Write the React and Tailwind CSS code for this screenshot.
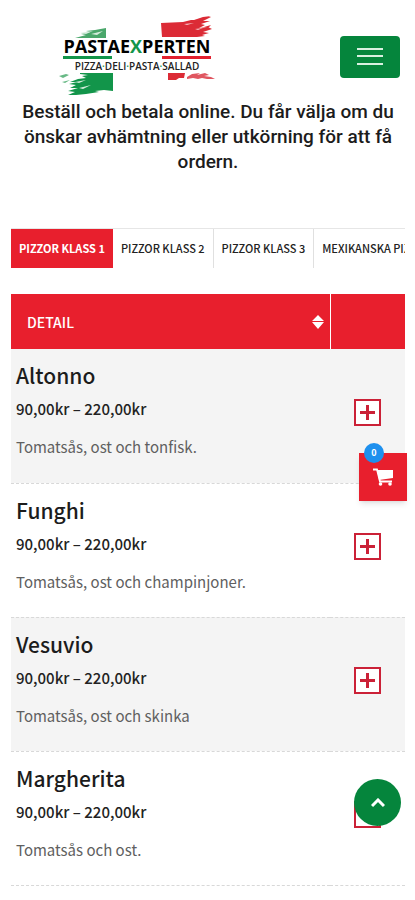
import React, { useState } from 'react';

const tabs = ['Pizzor klass 1', 'Pizzor klass 2', 'Pizzor klass 3', 'Mexikanska pizzor'];

const pizzas = [
  { name: 'Altonno', price: '90,00kr – 220,00kr', text: 'Tomatsås, ost och tonfisk.' },
  { name: 'Funghi', price: '90,00kr – 220,00kr', text: 'Tomatsås, ost och champinjoner.' },
  { name: 'Vesuvio', price: '90,00kr – 220,00kr', text: 'Tomatsås, ost och skinka' },
  { name: 'Margherita', price: '90,00kr – 220,00kr', text: 'Tomatsås och ost.' },
];

const Logo = () => (
  <svg width="160" height="86" viewBox="0 0 160 86" role="img" aria-label="Pastaexperten">
    {/* green brush, top left */}
    <path d="M48 14l-11 2-9 1 4 1-9 2 5 1-11 3h31z" fill="#4aa76b" />
    <path d="M22 19l13-2-7 3zM33 20l12-3-6 4z" fill="#d5ecdc" />
    {/* red brush, top right */}
    <path
      d="M103 9l22-1 8-2 6 0 8-3 6 0-8 4 7 0-9 3 4 1-6 3 9-1 4 2-9 3 6 1-7 2 3 1-8 1h-35z"
      fill="#dc2b36"
    />
    <path d="M136 6l9-3 8-1-9 4zM146 13l7-2-3 3z" fill="#dc2b36" />
    <path d="M126 10l10-1-7 2zM137 15l8-1-5 2z" fill="#f6c4c8" />
    {/* lines below the name */}
    <path d="M5 42h49v3H5z" fill="#12954a" />
    <path d="M104 42h49v3h-49z" fill="#e2202f" />
    {/* green brush, bottom left */}
    <path
      d="M22 59h33v18l-9-1-9 1 4 1-13 2-10 1-8 0 7-3-7-1 10-3-8 0 6-3-7-1 8-2-7 0 8-3 8-1-4-2 6-1-8-1z"
      fill="#12954a"
    />
    <path d="M1 62l7-2 3 1-6 3zM4 68l8-2-5 3z" fill="#67b985" />
    <path d="M17 68l11-2-7 3zM21 74l12-3-8 4z" fill="#d5ecdc" />
    {/* red brush, bottom right */}
    <path d="M110 59h17l-1 5-5 0-3 2-8 0z" fill="#dc2b36" />
    <path
      d="M129 63l5-3 8-1-3 2 8-2 4 2-5 1 7 1 4 2-8 0-5-1-4 1-5-1-6 1z"
      fill="#e05660"
    />
    <text
      x="79"
      y="39"
      textAnchor="middle"
      className="fill-black font-['Open_Sans',sans-serif] text-[18px] font-bold"
    >
      PASTAE<tspan className="fill-[#12954a]">X</tspan>PERTEN
    </text>
    <text
      x="79"
      y="56"
      textAnchor="middle"
      className="fill-[#222] font-['Open_Sans',sans-serif] text-[10px] font-semibold"
    >
      PIZZA<tspan className="fill-[#12954a]">·</tspan>DELI<tspan className="fill-[#12954a]">·</tspan>PASTA<tspan className="fill-[#12954a]">·</tspan>SALLAD
    </text>
  </svg>
);

const PlusIcon = () => (
  <svg width="27" height="27" viewBox="0 0 27 27" fill="none" stroke="#cb2137">
    <rect x="1" y="1" width="25" height="25" fill="#fff" strokeWidth="2" />
    <path d="M13.500 6v15M6 13.500h15" strokeWidth="3" />
  </svg>
);

const CartIcon = () => (
  <svg width="21" height="19" viewBox="0 0 21 19" fill="none">
    <path d="M0 1.500h4l3 12h12" stroke="#fff" strokeWidth="1.800" />
    <path d="M4 2h16v8L6 12z" fill="#fff" />
    <circle cx="7.500" cy="16" r="1.800" fill="#fff" />
    <circle cx="17" cy="16" r="1.800" fill="#fff" />
  </svg>
);

const App = () => {
  const [active, setActive] = useState(0);

  return (
    <div className="min-h-screen bg-white pr-[10px] pl-[11px] font-['Noto_Sans_CJK_SC',sans-serif] text-[#222]">
      <header className="flex items-start justify-between pt-[14px] pr-[5px] pl-[47px]">
        <a href="#" className="block">
          <Logo />
        </a>
        <button
          type="button"
          aria-label="Meny"
          className="mt-[22px] flex h-[42px] w-15 items-center justify-center rounded-sm bg-[#05853c]"
        >
          <svg width="26" height="20" viewBox="0 0 26 20" stroke="#d9f0e0" strokeWidth="2">
            <path d="M0 2h26M0 9h26M0 17h26" />
          </svg>
        </button>
      </header>

      <h1 className="-mt-px text-center font-['Roboto',sans-serif] text-[19px] leading-[25px] font-medium text-[#1c1c1c]">
        Beställ och betala online. Du får välja om du önskar avhämtning eller utkörning för att få ordern.
      </h1>

      <nav className="mt-[54px] flex overflow-x-auto border-t border-[#e6e6e6] [scrollbar-width:none]">
        {tabs.map((tab, i) => (
          <button
            key={tab}
            type="button"
            onClick={() => setActive(i)}
            className={
              i === active
                ? 'h-[39px] shrink-0 bg-[#e81f2d] px-2 text-[11px] font-bold whitespace-nowrap text-white uppercase'
                : 'h-[39px] shrink-0 border-r border-[#e0e0e0] px-2 text-[11px] font-medium whitespace-nowrap text-[#222] uppercase'
            }
          >
            {tab}
          </button>
        ))}
      </nav>

      <table className="mt-[26px] w-full table-fixed border-collapse">
        <thead>
          <tr className="h-[55px] bg-[#e81f2d] text-white">
            <th className="border-r border-white pr-[6px] pl-4 text-left text-sm font-medium">
              <div className="flex items-center justify-between">
                DETAIL
                <svg width="12" height="14" viewBox="0 0 12 14" fill="#fff">
                  <path d="M6 0l6 6H0zM0 7h12l-6 7z" />
                </svg>
              </div>
            </th>
            <th className="w-[75px]"></th>
          </tr>
        </thead>
        <tbody>
          {pizzas.map((pizza) => (
            <tr key={pizza.name} className="h-[134px] border-b border-dashed border-[#d8d8d8] odd:bg-[#f4f4f4]">
              <td className="pl-[5px] align-top">
                <h2 className="mt-[10px] text-[21px] leading-8 font-medium text-[#1c1c1c]">{pizza.name}</h2>
                <p className="mt-[6px] text-[15px] leading-6 font-medium">{pizza.price}</p>
                <p className="mt-[14px] text-[15px] leading-6 text-[#606060]">{pizza.text}</p>
              </td>
              <td className="pb-2 text-center">
                <button type="button" aria-label={`Lägg till ${pizza.name}`} className="align-middle">
                  <PlusIcon />
                </button>
              </td>
            </tr>
          ))}
        </tbody>
      </table>

      <button
        type="button"
        aria-label="Varukorg"
        className="fixed top-[453px] right-2 flex size-12 items-center justify-center bg-[#e81f2d] shadow-md"
      >
        <CartIcon />
        <span className="absolute -top-[10px] left-[5px] flex size-5 items-center justify-center rounded-full bg-[#1e90ee] text-[9px] font-bold text-white">
          0
        </span>
      </button>

      <a
        href="#"
        aria-label="Till toppen"
        className="fixed right-[14px] bottom-[74px] flex size-[47px] items-center justify-center rounded-full bg-[#05853c]"
      >
        <svg width="14" height="10" viewBox="0 0 14 10" fill="none" stroke="#fff" strokeWidth="3">
          <path d="M1 8l6-6 6 6" />
        </svg>
      </a>
    </div>
  );
};

export default App;
